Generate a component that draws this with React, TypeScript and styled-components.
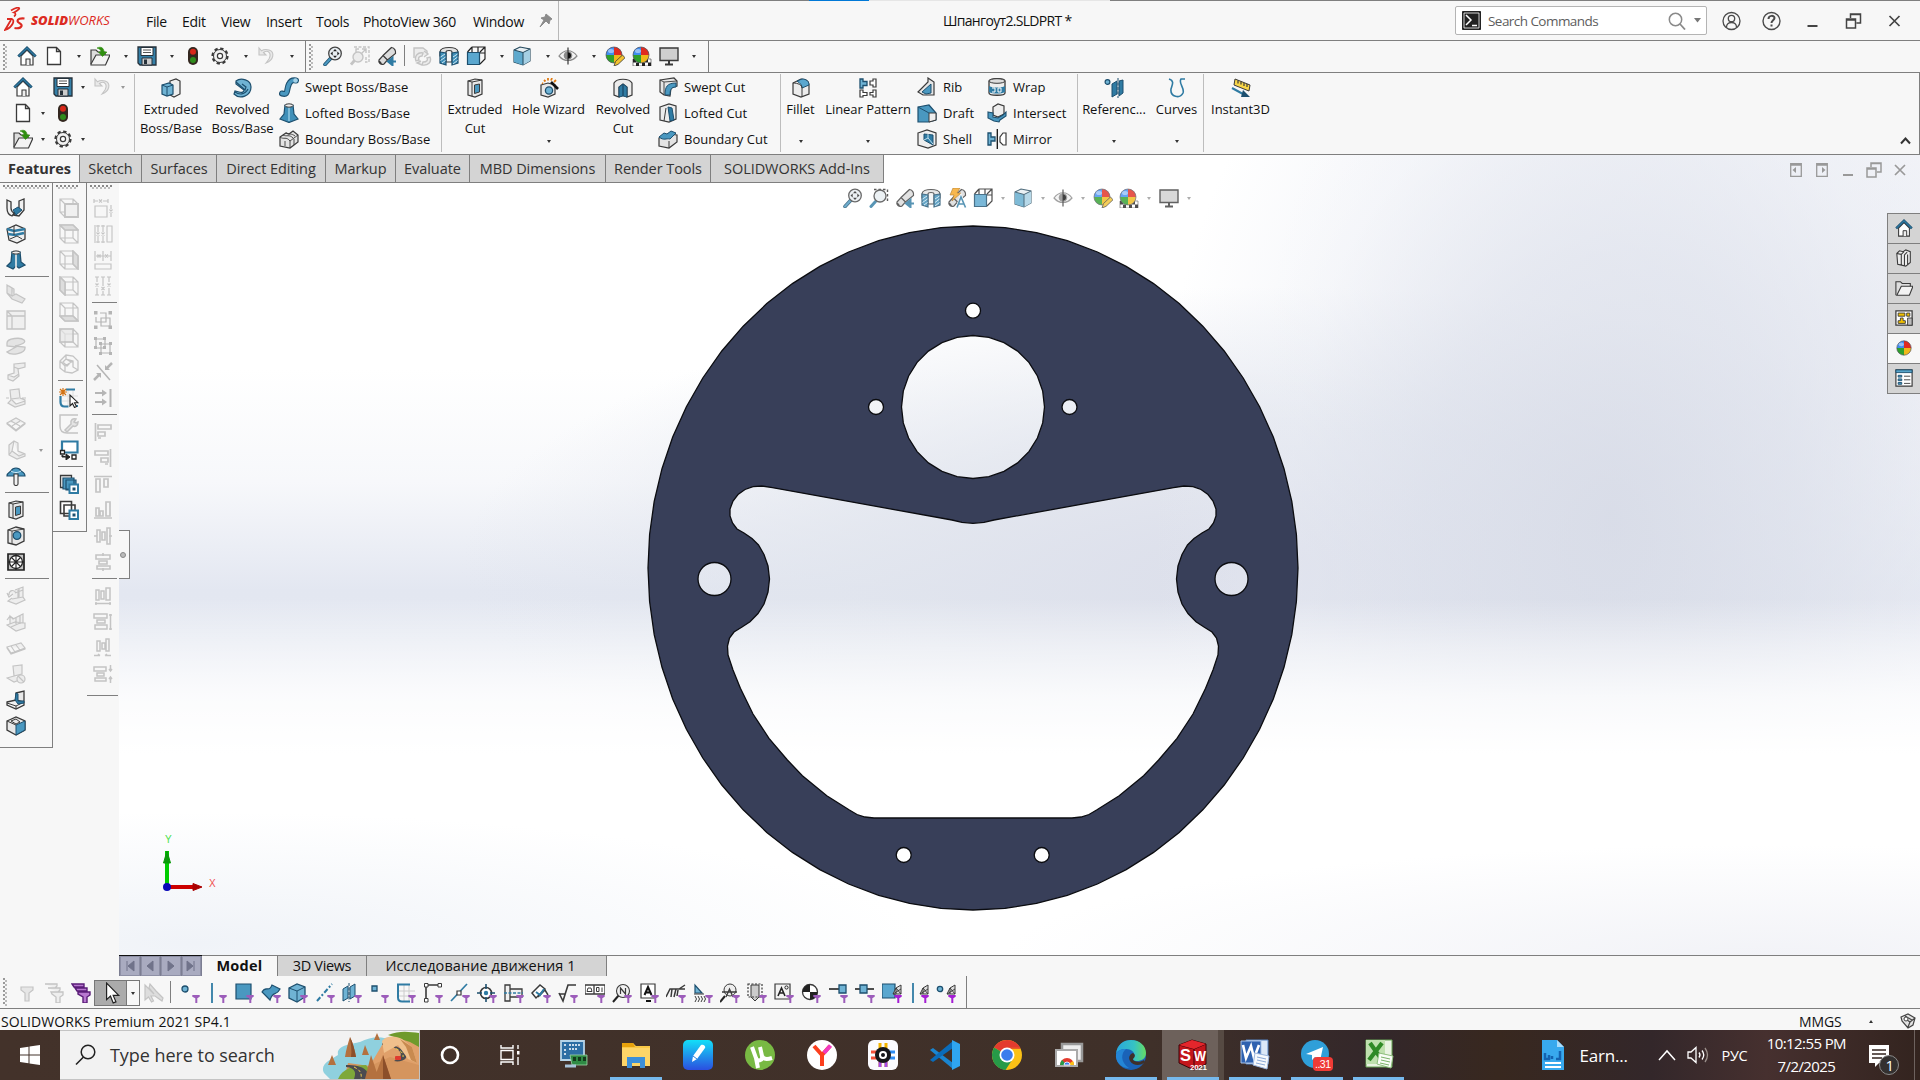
import React from 'react';
import styled, { createGlobalStyle } from 'styled-components';

const Global = createGlobalStyle`
  *{box-sizing:border-box}
  body{margin:0;background:#f7f7f7;overflow:hidden}
  svg{display:block;flex:none}
`;

const K = '#3a3a3a';
const B = '#2f7ba3';
const L = '#6fb3d4';
const D = '#1d4f6e';
const G = '#c4c4c4';
const P = '#9c5cba';
const M = '#b5b5b5';

/* ---------- glyphs, 20 x 20 ---------- */
const funnel = <path d="M12.3 12h7.4v1.8l-2.4 1.4V20h-2v-4.8l-3-1.4z" fill={P} />;
const funnelHot = <path d="M12.3 12h7.4v1.8l-2.4 1.4V20h-2v-4.8l-3-1.4z" fill="#a41ed4" />;
const mesh = <path d="M11 11l3-6 5-3v9zM14 5v6M11 11l8-5M14 5l5 6" fill="#ddd" stroke={K} strokeWidth="1" />;
const ball = (
  <g>
    <path d="M9 9V1a8 8 0 0 0-8 8z" fill="#3f8df0" /><path d="M9 9V1a8 8 0 0 1 8 8z" fill="#e02b20" />
    <path d="M9 9H1a8 8 0 0 0 8 8z" fill="#2fa02c" /><path d="M9 9h8a8 8 0 0 1-8 8z" fill="#f0b81a" />
    <circle cx="9" cy="9" r="8" fill="none" stroke="#4a4a55" strokeWidth=".7" /><ellipse cx="6" cy="5" rx="3" ry="2" fill="#fff" opacity=".45" />
  </g>
);
const pencil = <path d="M9 20l1.5-4.500 7-6.500 2.500 2.800-7 6.600z" fill="#f2c230" stroke={K} strokeWidth=".8" />;
const checks = <g><path d="M1 13h18v7H1z" fill="#fff" stroke={K} strokeWidth=".6" /><path d="M1 13h3v3.500H1zM7 13h3v3.500H7zM13 13h3v3.500h-3zM4 16.500h3V20H4zM10 16.500h3V20h-3zM16 16.500h3V20h-3z" fill="#222" /></g>;
const lens = (x: number, y: number, r: number, f = '#e8eef2') => <circle cx={x} cy={y} r={r} fill={f} stroke="#444" strokeWidth="1.300" />;
const wire = <path d="M1 1h13v13H1zM6 6h13v13H6zM1 1l5 5M14 1l5 5M1 14l5 5M14 14l5 5" fill="none" stroke={G} strokeWidth="1.200" />;
const flash = <path d="M6 0h7l-3 5h4L5 13l2-6H3z" fill="#f6a623" stroke="#9a5b00" strokeWidth=".6" />;
const scope = <path d="M2 14l4-4.500 4.500 4.500L7 18c-3 1.500-6-1.500-5-4zM6 9.500L14.500 1.500c3 .5 4.500 3 4 6L10.500 14zM1.500 15c1 0 3 2 3 3.500" fill="#dcdcdc" stroke={K} strokeWidth="1.200" />;

const glyphs: Record<string, React.ReactNode> = {
  home: <g><path d="M4 10v9h12v-9l-6-6z" fill="#fff" stroke={K} strokeWidth="1.200" /><path d="M9 19v-6h4v6" fill="#eee" stroke={K} strokeWidth="1.100" /><path d="M1.300 10.500L10 2l8.700 8.500" fill="none" stroke={D} strokeWidth="2.800" /><path d="M1.600 10.100L10 2l8.400 8.100" fill="none" stroke={B} strokeWidth="1.200" /></g>,
  doc: <path d="M3.500 1.500h9l4 4v13h-13zM12.500 1.500v4h4" fill="#fff" stroke={K} strokeWidth="1.300" />,
  open: <g><path d="M1 18V4h5l2 2h7v3" fill="#ddd" stroke={K} strokeWidth="1.200" /><path d="M1 18L6 9h14l-4.500 10H1z" fill="#f3f3f3" stroke={K} strokeWidth="1.200" /><path d="M7 2c4-2 7 0 7 4h3l-4.500 4.500L8.500 6H11c0-2-1-3-4-4z" fill="#2f8f0f" stroke="#2f8f0f" strokeWidth=".6" /></g>,
  folder: <g><path d="M1 18V3h5l2 2h9v4" fill="#ddd" stroke={K} strokeWidth="1.200" /><path d="M2 18L7 8h13l-4 10z" fill="#f3f3f3" stroke={K} strokeWidth="1.200" /></g>,
  save: <g><path d="M1 1h18v18H3l-2-2z" fill="#3580a8" stroke="#26313a" strokeWidth="1.300" /><path d="M4 1.500h12v8H4z" fill="#fff" stroke="#26313a" /><path d="M6 4h8M6 6.500h8" stroke="#555" /><path d="M5 12h10v7H5z" fill="#ccc" stroke="#26313a" /><path d="M7 13.500h3V18H7z" fill="#26313a" /></g>,
  traffic: <g><rect x="5" y="1" width="10" height="18" rx="5" fill="#33271f" /><circle cx="10" cy="5.800" r="3" fill="#d8281a" /><circle cx="10" cy="14" r="3" fill="#2f8c1c" /></g>,
  gear: <g><circle cx="10" cy="10" r="7.400" fill="#f2f2f2" stroke={K} strokeWidth="2.400" strokeDasharray="3.300 2.500" /><circle cx="10" cy="10" r="6.500" fill="#f2f2f2" stroke={K} strokeWidth="1" /><circle cx="10" cy="10" r="2.600" fill="#fff" stroke={K} strokeWidth="1.200" /></g>,
  undo: <path d="M2 2v7h7L6.500 6.500C11 3.500 15 7 12 13l-3 4c8-3 9-11 3-13C9 3 6.500 3.500 4.500 4.800z" fill="#e9e9e9" stroke={G} strokeWidth="1.100" />,
  zoomFit: <g><path d="M8 12l-6 6.500" stroke={D} strokeWidth="3.600" strokeLinecap="round" /><path d="M8 12l-6 6.500" stroke="#4a98c0" strokeWidth="2" strokeLinecap="round" />{lens(12, 7.5, 6.3)}<path d="M12 3l2 2.200h-4zM12 12l2-2.200h-4zM7.500 7.500l2.200-2v4zM16.500 7.500l-2.200-2v4z" fill="#222" /></g>,
  zoomOff: <g stroke={G} fill="none" strokeWidth="1.400"><path d="M4 1h15v15h-4" strokeDasharray="3 1.500" /><circle cx="8" cy="11" r="5" fill="#ececec" /><path d="M4.500 14.500L1 18.500" strokeWidth="2.800" /><path d="M11 8l5-5m-4 0h4v4M9 3H6v3M16 11v3" /></g>,
  prev: <g>{scope}<path d="M19 15.500h-6M15.500 11.800l-4.500 3.700 4.500 3.700z" fill={B} stroke={B} strokeWidth="2" /></g>,
  zoomArea: <g><path d="M5 1.500h13.500v13" fill="none" stroke="#333" strokeWidth="1.400" strokeDasharray="2.500 2" /><path d="M6.500 13.500L2 18.500" stroke={B} strokeWidth="3" strokeLinecap="round" />{lens(11, 8, 6)}</g>,
  rotOff: <g fill="#ececec" stroke={G} strokeWidth="1.400"><path d="M2 12V2h9l4 3v3" /><path d="M4 15c-2-5 2-9 7-8l-1 3c-3 0-4 2-3 4zM18 11c2 5-2 9-8 8l1-3c4 0 5-2 4-4zM12 5l4 3-4 3M9 15l-4 2 5 2" /></g>,
  section: <g><path d="M1 6c0-6 18-6 18 0v4H1z" fill="#e2e2e2" stroke={K} strokeWidth="1.200" /><path d="M7 6c0-2 6-2 6 0v10H7z" fill="#f5f5f5" stroke={K} strokeWidth="1.100" /><path d="M1 6l6 1v12l-6-2zM19 6l-6 1v12l6-2z" fill="#3f8fb8" stroke={D} strokeWidth="1.200" /><path d="M1.500 11L6 8M1.500 14.500L6.500 11M3 17l3.500-2.500M14 11l4.500-3M14 14.500l4.500-3.500M14 18l4.500-3.500" stroke="#cfe8f4" strokeWidth="1" /></g>,
  orient: <g><path d="M6 1h13v12l-5 5M6 1L1.500 6M19 1l-5 5M12 1v6M14 7h5M6 1v5" fill="none" stroke="#222" strokeWidth="1.200" /><path d="M1.500 6.500h12v12h-12z" fill="#5aa7cf" stroke={D} strokeWidth="1.200" /></g>,
  shaded: <g><path d="M2 4l6-3 10 2v12l-7 4-9-3z" fill="#e6eef2" stroke="#24485c" strokeWidth="1.100" /><path d="M2 4l9 2.500V19l-9-3z" fill="#5ea9cd" /><path d="M11 6.500L18 3v12l-7 4z" fill="#a5cfe3" /><path d="M2 4l9 2.500L18 3M11 6.500V19" fill="none" stroke="#24485c" /></g>,
  eye: <g><path d="M1 10c5-7 13-7 18 0-5 6-13 6-18 0z" fill="#f3f3f3" stroke="#8a8a8a" strokeWidth="1.200" /><circle cx="10" cy="9.500" r="4.300" fill="#8a8a8a" /><path d="M10 1.500v17" stroke="#333" strokeWidth="1.200" /><path d="M10 6.500a3 3 0 0 1 0 6z" fill="#111" /></g>,
  ballPencil: <g>{ball}{pencil}</g>,
  ballScene: <g>{checks}{ball}</g>,
  ball: <g transform="translate(1 1)">{ball}</g>,
  monitor: <g><path d="M1 2h18v12.500H1z" fill="#cfcfcf" stroke={K} strokeWidth="1.400" /><path d="M10 14.500v4M6 18.500h8" stroke={K} strokeWidth="2" /></g>,
  annot: <g>{scope}{flash}<path d="M10 19.500L14 9l4.500 10.500M11.500 16h5.500" fill="none" stroke="#fff" strokeWidth="3" /><path d="M10 19.500L14 9l4.500 10.500M11.500 16h5.500" fill="none" stroke={B} strokeWidth="1.600" /></g>,
  extrude: <g><path d="M9 3l6-2 4 2v13l-6 3-4-2z" fill="#eee" stroke={K} strokeWidth="1.200" /><path d="M1 7l7-2 4 2v9l-6 2-5-2z" fill={L} stroke={D} strokeWidth="1.200" /><path d="M1 7l5 2 6-2M6 9v9" fill="none" stroke={D} /></g>,
  revolve: <g><path d="M3 3c5-4 15-1 15 6 0 9-11 13-17 7l1-3 4 1c3 1 5 0 5-2L3 6z" fill={L} stroke={D} strokeWidth="1.200" /><path d="M3 4l9 8 1-3-4-3M2 14c4 3 10 3 13-3" fill="none" stroke={D} strokeWidth="1.200" /></g>,
  sweep: <g><path d="M3 16.500c7 2 4-4 7-9.500 2-4 4-4 7-3.500" fill="none" stroke={D} strokeWidth="6" strokeLinecap="round" /><path d="M3 16.500c7 2 4-4 7-9.500 2-4 4-4 7-3.500" fill="none" stroke="#4a98c0" strokeWidth="3.800" strokeLinecap="round" /><circle cx="16.500" cy="3.500" r="2.200" fill="#a5d2e8" /></g>,
  loft: <g><path d="M6 2h8l1 9 4 5-9 3.500L1 16l4-5z" fill="#3f8fb8" stroke={D} strokeWidth="1.200" /><path d="M10 4v14" stroke="#7dbbd8" strokeWidth="2" /><ellipse cx="10" cy="2.500" rx="4" ry="1.700" fill="#eee" stroke={K} /></g>,
  boundary: <g><path d="M1 8l6-4 3 1 4-3 5 4v7l-8 6-10-2z" fill="#e4e4e4" stroke={K} strokeWidth="1.200" /><path d="M1 8c4 3 6-1 10 4l8-6M11 12v7M4 6c4 2 6-1 10 3M7 4c4 2 5 0 9 3M6 12v5M15 10v6" fill="none" stroke={K} strokeWidth=".9" /></g>,
  cutExtrude: <g><path d="M3 3l7-2 7 1v14l-7 3-7-2z" fill="#e8e8e8" stroke={K} strokeWidth="1.200" /><path d="M3 3l4 1 10-2M7 4v14.500" fill="none" stroke={K} /><path d="M9.500 7l5-1v8l-5 1.500z" fill="#4a98c0" stroke={K} /></g>,
  hole: <g><path d="M2 7l7-2 7 2v9l-7 3-7-2z" fill="#e8e8e8" stroke={K} strokeWidth="1.200" /><circle cx="10" cy="12.500" r="3.600" fill={L} stroke={D} strokeWidth="1.300" /><path d="M12 4l7 7" stroke="#111" strokeWidth="2.600" /><path d="M5 2l1.500 1.500M9 0v2.500M13 0l-1 2.500M3 5l1 .5M17 2l-2 2" stroke="#e07b12" strokeWidth="1.800" /></g>,
  revCut: <g><path d="M1 5c3-5 15-5 18 0v12l-5 2V9l-4-3-4 3v10l-5-2z" fill="#ececec" stroke={K} strokeWidth="1.200" /><path d="M6 9l4-3v12l-4 1zM10 6l4 3v10l-4-1z" fill={B} stroke={D} /></g>,
  sweptCut: <g><path d="M2 3l14-2 3 3v5l-6 2-1 8-6-1-4-3z" fill="#e6e6e6" stroke={K} strokeWidth="1.200" /><path d="M7 18c0-8 2-12 11-12v4c-5 0-6 3-6 8z" fill="#4a98c0" stroke={D} /><path d="M2 3l4 2v13M6 5l13-1" fill="none" stroke={K} strokeWidth=".9" /></g>,
  loftCut: <g><path d="M2 4l9-3 7 2v13l-7 3-9-2z" fill="#ececec" stroke={K} strokeWidth="1.200" /><path d="M10 4l4 1 2 12-4 1z" fill={B} stroke={D} /><path d="M8 5L6 18" stroke={K} /></g>,
  boundCut: <g><path d="M1 9l9-4 9 1v7l-8 6-10-2z" fill="#e4e4e4" stroke={K} strokeWidth="1.200" /><path d="M1 8l5-4 3 1 4-3 5 2-6 6c-4-1-6 2-11-2z" fill="#4a98c0" stroke={D} /><path d="M11 12v7" stroke={K} /></g>,
  fillet: <g><path d="M2 5l8-4c5 0 8 2 8 6v9l-8 3-8-3z" fill="#ececec" stroke={K} strokeWidth="1.200" /><path d="M6 3l5-2c4 0 7 2 7 6l-7 3c0-3-2-5-5-7z" fill="#5aa7cf" stroke={D} /><path d="M11 10v9M2 5c5 0 9 2 9 5" fill="none" stroke={K} /></g>,
  pattern: <g><path d="M2 1h3v2.500h4v4H5V10H2z" fill={L} stroke={D} strokeWidth="1.300" /><path d="M12 3h3V1h3v8h-3V7h-3zM2 12h3v2.500h4v3H5V19H2zM12 14.500h3V12h3v7h-3v-2h-3z" fill="#fff" stroke={K} strokeWidth="1.200" /></g>,
  rib: <g><path d="M1 15L11 5V1l6 4v13H6z" fill="#e6e6e6" stroke={K} strokeWidth="1.200" /><path d="M5 15l9-8v9l-5 1z" fill="#4a98c0" stroke={D} /></g>,
  draft: <g><path d="M1 4l11-2 7 8v7l-7 2H1z" fill="#4a98c0" stroke={D} strokeWidth="1.200" /><path d="M12 10h7v7l-7 2z" fill="#eee" stroke={K} /><path d="M1 4l11 6" stroke={D} /></g>,
  shell: <g><path d="M1 4l9-3 9 3v12l-8 3-10-3z" fill="#eee" stroke={K} strokeWidth="1.200" /><path d="M7 5l9 1v10l-9-5z" fill={B} stroke={D} /><path d="M7 11l4-2V5M11 9l5 6" fill="none" stroke="#bfe0ef" /></g>,
  wrap: <g><path d="M2 4c0-3 16-3 16 0v12c0 3-16 3-16 0z" fill="#eee" stroke={K} strokeWidth="1.300" /><ellipse cx="10" cy="4" rx="8" ry="2.300" fill="#ddd" stroke={K} /><path d="M2 9c4 2 12 2 16 0v6c-4 2-12 2-16 0z" fill={B} /><path d="M5 11h3v4H5M11 11h3v4h-3z" fill="none" stroke="#fff" /></g>,
  intersect: <g><path d="M6 4l5-3 6 2v8l-6 3-5-2z" fill="#eee" stroke={K} strokeWidth="1.200" /><path d="M1 9l5 1v4l5 1 5-3 3-3v4l-6 4-1 2-5-1-6-3z" fill="#4a98c0" stroke={D} strokeWidth="1.100" /></g>,
  mirror: <g><path d="M1 4h3v4h4v4H4v4H1z" fill={L} stroke={D} strokeWidth="1.300" /><path d="M19 4v12h-3l-3-3V8l3-4z" fill="#fff" stroke={K} strokeWidth="1.200" /><path d="M10.300 0v20" stroke="#111" strokeWidth="1.300" /></g>,
  refgeom: <g><circle cx="3.500" cy="4" r="2.400" fill={L} stroke={D} strokeWidth="1.200" /><path d="M8 6l5-3v13l-5 3zM15 3l4-1v13l-4 3z" fill={B} stroke={D} /><path d="M14 0v20" stroke={D} strokeDasharray="3 1.500" /></g>,
  curves: <path d="M2 1c6 2 3 6 2 10-1 8 9 10 12 4 2-5-5-10-2-14h4" fill="none" stroke={B} strokeWidth="1.600" />,
  instant: <g><path d="M4 1l15 6-1 6L3 7z" fill="#f8d648" stroke={K} /><path d="M7 2.500v3M10 3.500v3M13 5v3M16 6v3" stroke={K} strokeWidth="1.200" /><path d="M1 10l11 6" stroke={B} strokeWidth="2" /><path d="M12 12l7 7h-9z" fill={D} /></g>,
  bendA: <g><path d="M1 2l4 2v6c0 2 1 4 3 5l-2 3c-3-1-5-4-5-8zM13 3l5-2v11l-5 6-6-1 6-5z" fill="#f0f0f0" stroke={K} strokeWidth="1.300" /><path d="M7 12l5-3 4 3-6 5z" fill={B} stroke={D} /></g>,
  bendB: <g><path d="M1 5l9-4 9 4v10l-8 4-8-3z" fill="#f0f0f0" stroke={K} strokeWidth="1.300" /><path d="M1 5l7 2 11-2M2 10l7 1 9-2" fill="none" stroke={B} strokeWidth="2.400" /><path d="M8 2v9M4 15l7-3 5 3" fill="none" stroke={K} /></g>,
  bendC: <g><path d="M6 2h8l1 10 4 3-6 3-3-2-3 3-6-3 4-4z" fill="#2f7ba3" stroke={D} strokeWidth="1.300" /><path d="M10 4v14" stroke="#eee" strokeWidth="1.600" /><ellipse cx="10" cy="2.500" rx="4" ry="1.600" fill="#eee" stroke={K} /></g>,
  g1: <path d="M1 1l5 3v8l-5-3zM6 12l4-2 9 5-3 4-10-4-5-6M3 2l5 3v6" fill="#e4e4e4" stroke={G} strokeWidth="1.200" />,
  g2: <path d="M1 1h18v18H1zM1 6h18M6 6v13M1 1l5 5" fill="#efefef" stroke={G} strokeWidth="1.300" />,
  g3: <path d="M1 7c0-5 14-6 17-3 2 2 0 4-9 6l10 1c1 7-14 9-18 5l9-5-9-1z" fill="#e4e4e4" stroke={G} strokeWidth="1.300" />,
  g4: <path d="M8 2l11-1v4l-7 2 1 7-6 5-5-2 0-4 6-2zM8 5l5 2M2 13l6 2 5-3" fill="#ececec" stroke={G} strokeWidth="1.200" />,
  g5: <path d="M4 2l9-1 1 9 5 2v4l-10 3-7-4 3-3zM5 11l8-1M6 12l4 4 9-3M0 10h3M16 10h4" fill="#ececec" stroke={G} strokeWidth="1.200" />,
  g6: <path d="M1 9l9-5 9 5-9 7zM5 7l9 5M14 7l-8 5M1 9v1l9 7 9-7V9" fill="#efefef" stroke={G} strokeWidth="1.100" />,
  g7: <path d="M3 5l5-4 4 2v8l7 3v2l-8 3-8-4zM8 1l-2 10 7 5M6 11l-3 4M13 16l5-2" fill="#ececec" stroke={G} strokeWidth="1.200" />,
  umbrella: <g><path d="M1 10c0-3 3-4 4-5 2-4 8-4 10 0 2 1 4 2 4 5H1z" fill="#4a98c0" stroke={D} strokeWidth="1.200" /><path d="M5 5c3 2 7 2 10 0" fill="none" stroke="#d5edf8" /><path d="M8 8h4v10c0 2-4 2-4 0z" fill="#f3f3f3" stroke={K} strokeWidth="1.100" /></g>,
  holeSq: <g><path d="M2 4l8-3 8 2v12l-8 4-8-2z" fill="#e8e8e8" stroke={K} strokeWidth="1.300" /><circle cx="11" cy="9.500" r="3.800" fill="#4a98c0" stroke={D} strokeWidth="1.300" /><path d="M2 4l4 1 12-2M6 5v13" fill="none" stroke={K} strokeWidth=".9" /></g>,
  vent: <g><path d="M2 2h16v16H2z" fill="#c4c4c4" stroke="#222" strokeWidth="1.700" /><circle cx="10" cy="10" r="6.500" fill="#fff" stroke="#222" strokeWidth="1.300" /><path d="M10 2v16M2 10h16M5.500 5.500l9 9M14.500 5.500l-9 9" stroke="#222" strokeWidth="1.100" /></g>,
  g8: <path d="M9 4l8-3v10l2 3-9 4-8-3 4-3M3 9c0-5 5-6 7-2M1 7l2 4 4-3M12 4v8M6 13l11-2M13 2v9M9 7l8-3" fill="#eee" stroke={G} strokeWidth="1.200" />,
  g9: <path d="M1 13l8-3 10 1v5l-9 3zM4 12V4l3 3 10-5v9M10 6v6M14 4v8M1 8l3-4 4 3M5 15l9-4" fill="#eee" stroke={G} strokeWidth="1.200" />,
  g10: <path d="M1 9l14-4 4 5-14 5zM5 8l4 6M10 7l4 5M1 9v1l4 6 14-5v-1" fill="#efefef" stroke={G} strokeWidth="1.100" />,
  g11: <g stroke={G} fill="#ececec" strokeWidth="1.200"><path d="M7 2l9-1v9l-8 2zM8 12l-7 2 7 4 8-3" /><circle cx="15" cy="15" r="4" /><path d="M12 12l6 6" /></g>,
  fold: <g><path d="M10 3l8-2v10l-8 3z" fill="#e8e8e8" stroke={K} strokeWidth="1.300" /><path d="M1 12l9-2 8 2v3l-8 4-9-4z" fill="#f2f2f2" stroke={K} strokeWidth="1.300" /><path d="M1 13l9 3 8-4M10 16v3" fill="none" stroke={K} /><path d="M9 10l1-7 2 1v7l6 0v2l-6 1z" fill={B} stroke={D} /></g>,
  box3: <g><path d="M1 5l9-4 9 4v9l-9 5-9-5z" fill="#e8e8e8" stroke={K} strokeWidth="1.300" /><path d="M10 9l9-4v9l-9 5z" fill="#4a98c0" stroke={D} /><path d="M1 5l9 4M5 5l5-2 4 3-4 2z" fill="none" stroke={K} /></g>,
  w1: <g>{wire}<path d="M6 6h13v13H6z" fill="#f0f0f0" stroke={G} strokeWidth="1.800" /></g>,
  w2: <g>{wire}<path d="M1 1h13l5 5H6z" fill="#ddd" stroke={G} strokeWidth="1.600" /></g>,
  w3: <g>{wire}<path d="M14 1l5 5v13l-5-5z" fill="#ddd" stroke={G} strokeWidth="1.600" /></g>,
  w4: <g>{wire}<path d="M1 1l5 5v13l-5-5z" fill="#ddd" stroke={G} strokeWidth="1.600" /></g>,
  w5: <g>{wire}<path d="M1 14h13l5 5H6z" fill="#ddd" stroke={G} strokeWidth="1.600" /></g>,
  w6: <g>{wire}<path d="M1 1h13v13H1z" fill="#e6e6e6" opacity=".7" stroke={G} strokeWidth="1.800" /></g>,
  w7: <path d="M1 7l6-6 7 1 5 5v9l-6 3-7-1-5-4zM1 7l5 5 8-5M6 12v6M7 1v4l7 2v6l5 3M7 5L4 8l4 4 4-4z" fill="none" stroke={G} strokeWidth="1.300" />,
  sketch: <g><path d="M9 2v16M14 2v16M3 8h16M3 13h16" stroke="#ddd" /><path d="M7 1.500h9M1.500 8v6c0 3 1 4.500 4 4.500h4M16 18h3" fill="none" stroke={B} strokeWidth="2.200" /><path d="M4 0v8M0 4h8M1 1l6 6M7 1L1 7" stroke="#d27416" strokeWidth="1.200" /><path d="M11 7v11l2.500-2.500 2 4 2-1-2-3.800H19z" fill="#fff" stroke="#222" strokeWidth="1.100" /></g>,
  wrench: <g fill="none" stroke={G} strokeWidth="1.500"><path d="M1 12V1h18M1 12c0 5 2 7 7 7h11" /><path d="M6 16l6-6c-1-4 2-6 5-5l-2 3 2 1 2-1c0 4-3 5-5 4l-6 6z" fill="#e4e4e4" /></g>,
  screen: <g><path d="M3 1.500h15.500v11H3z" fill="#fff" stroke={B} strokeWidth="2.200" /><path d="M1.500 10.500h4v3.500h-4zM13 15h4v4h-4z" fill="#fff" stroke="#222" strokeWidth="1.300" /><path d="M3 15v2h5M7 14l4 3-4 3z" fill="#222" stroke="#222" /></g>,
  stackA: <g><path d="M1.500 1.500h11v12h-11z" fill="#ececec" stroke={K} strokeWidth="1.300" /><path d="M4 4h11v11H4zM7 6h10v10H7z" fill="#4a98c0" stroke={D} strokeWidth="1.200" /><path d="M10.500 10.500h8.500v8.500h-8.500z" fill="#fff" stroke={B} strokeWidth="2" /><path d="M13.500 13.500h3v3h-3z" fill={D} /></g>,
  stackB: <g><path d="M1.500 1.500h11v12h-11zM5 5h11v11H5z" fill="#fff" stroke={K} strokeWidth="1.600" /><path d="M10.500 10.500h8.500v8.500h-8.500z" fill="#fff" stroke={B} strokeWidth="2" /><path d="M13.500 13.500h3v3h-3z" fill={D} /></g>,
  d1: <path d="M2 8h12v11H2zM1 3h4M10 3h5M6 1.500l3 3M9 1.500l-3 3M1 1v4M15 1v4M18 7v4M18 15v4M16.500 11.500l3 3M19.500 11.500l-3 3" fill="none" stroke={G} strokeWidth="1.200" />,
  d2: <path d="M2 1v18M14 2h5v16h-5zM5 1v7M5 12v7M10 1v7M10 12v7M3.500 8.500l3 3M6.500 8.500l-3 3M8.500 8.500l3 3M11.500 8.500l-3 3M3 2h4M3 18h4M8 2h4M8 18h4" fill="none" stroke={G} strokeWidth="1.100" />,
  d3: <path d="M2 1v10M10 1v10M18 1v10M3 6h2M7 6h5M15 6h3M4.500 4.500l3 3M7.500 4.500l-3 3M12 4.500l3 3M15 4.500l-3 3M2 14h16v5H2z" fill="none" stroke={G} strokeWidth="1.200" />,
  d4: <path d="M4 1v5M4 12v7M10 1v9M10 15v4M16 1v5M16 12v7M2 1h4M8 1h4M14 1h4M2 19h4M8 19h4M14 19h4M2.500 7.500l3 3M5.500 7.500l-3 3M8.500 11l3 3M11.500 11l-3 3M14.500 7.500l3 3M17.500 7.500l-3 3" fill="none" stroke={G} strokeWidth="1.200" />,
  d5: <g fill="none" stroke={M} strokeWidth="1.200"><path d="M7 3h6v9H3V7M8 8h9v8H8z" /><path d="M1 1h3.500v3.500H1zM15.500 1H19v3.500h-3.500zM1 15.500h3.500V19H1zM15.500 15.500H19V19h-3.500z" fill={M} stroke="none" /></g>,
  d6: <g fill="none" stroke={M} strokeWidth="1.200"><path d="M3 3h9v9H3zM8 8h9v9H8z" /><path d="M1 1h3v3H1zM10 1h3v3h-3zM1 10h3v3H1zM10 10h3v3h-3zM6 6h3v3H6zM16 6h3v3h-3zM6 16h3v3H6zM16 16h3v3h-3z" fill={M} stroke="none" /></g>,
  d7: <g fill="none" stroke={M} strokeWidth="1.500"><path d="M4 3l13 15" /><path d="M1 18l5-5M19 1l-5 5" strokeWidth="2.500" /><path d="M3 11h5v5zM17 8h-5V3z" fill={M} stroke="none" /></g>,
  d8: <g fill="none" stroke={M} strokeWidth="2"><path d="M2 5h9M2 14h9M17.500 1v18" /><path d="M9 1.500l5 3.500-5 3.500zM9 10.500l5 3.500-5 3.500z" fill={M} stroke="none" /></g>,
  a1: <path d="M2.500 1v18M5 3h13v4H5zM5 10h7v4H5zM5 16h3" fill="none" stroke={G} strokeWidth="1.700" />,
  a2: <path d="M17.500 1v18M2 3h13v4H2zM8 10h7v4H8zM12 16h3" fill="none" stroke={G} strokeWidth="1.700" />,
  a3: <path d="M1 2.500h18M3 5h4v13H3zM11 5h4v8h-4z" fill="none" stroke={G} strokeWidth="1.700" />,
  a4: <path d="M1 18h18M3 8h3v8H3zM7 11h3v5H7zM13 2h4v14h-4z" fill="none" stroke={G} strokeWidth="1.700" />,
  a5: <path d="M1 10h3M16 10h3M4 4h3v12H4zM9 6h3v8H9zM14 2h3v16h-3z" fill="none" stroke={G} strokeWidth="1.600" />,
  a6: <path d="M10 1v3M10 16v3M3 3h14v4H3zM6 9h8v3H6zM4 14h13v3H4z" fill="none" stroke={G} strokeWidth="1.600" />,
  b1: <path d="M3 4h3v10H3zM8 5h3v8H8zM13 2h4v12h-4zM2 17.500h16M3 16v3M17 16v3" fill="none" stroke={G} strokeWidth="1.500" />,
  b2: <path d="M1 2h13v4H1zM4 8h8v3H4zM2 13h12v4H2zM17.500 2v16M16 3h3M16 17h3" fill="none" stroke={G} strokeWidth="1.500" />,
  b3: <path d="M4 3h3v10H4zM9 5h3v6H9zM13 1h3v12h-3zM1 17.500h6M12 17.500h6M5 16l2 1.500M14 16l-2 1.500" fill="none" stroke={G} strokeWidth="1.500" />,
  b4: <path d="M1 3h12v4H1zM4 9h7v3H4zM2 14h11v3H2zM17.500 1v6M17.500 13v6M16 5l1.500 2L19 5M16 15l1.500-2 1.500 2" fill="none" stroke={G} strokeWidth="1.500" />,
  fOff: <path d="M4 4h12v3l-4 3v8H8v-8L4 7z" fill="#e6e6e6" stroke={G} strokeWidth="1.200" />,
  fOff2: <path d="M1 1h12v2l-2 2M4 5h12v2l-2 2M7 9h12v3l-3 2v6h-4v-6l-4-3z" fill="#eee" stroke={G} strokeWidth="1.300" />,
  fOn: <path d="M1 1h12v3H3zM4 5h12v3H6zM7 9h12v3l-3 2v6h-4v-6l-5-3z" fill="#b878d0" stroke="#5a1d78" strokeWidth="1.400" />,
  cursor: <path d="M6 1v15l3.500-3.300L12 19l2.500-1-2.500-5.800h5z" fill="#fff" stroke="#222" strokeWidth="1.100" />,
  cursOff: <path d="M1 2v15l3.500-3 3 5 2-1-2.500-5h4l7 5 1-3-7-7-6-7-1 4 5 6z" fill="#ddd" stroke={G} strokeWidth="1.200" />,
  s1: <g><circle cx="5" cy="6" r="3" fill={L} stroke={D} strokeWidth="1.300" />{funnel}</g>,
  s2: <g><path d="M5 0v20" stroke={B} strokeWidth="1.800" />{funnel}</g>,
  s3: <g><path d="M2 1h15v15H2z" fill="#4a98c0" stroke={D} strokeWidth="1.200" />{funnel}</g>,
  s4: <g><path d="M1 9c4-7 7 1 10-7l8 4c-4 8-7 1-10 11z" fill="#4a98c0" stroke={D} strokeWidth="1.200" />{funnel}</g>,
  s5: <g><path d="M1 5l8-4 8 3v10l-8 5-8-4z" fill="#6fb3d4" stroke={D} strokeWidth="1.300" /><path d="M1 5l8 3 8-4M9 8v10" fill="none" stroke={D} />{funnel}</g>,
  s6: <g><path d="M2 18L17 1" stroke={B} strokeWidth="2" strokeDasharray="5 2 2 2" />{funnel}</g>,
  s7: <g><path d="M1 6l5-3v12l-5 3zM8 4l5-3v12l-5 3z" fill={L} stroke={D} /><path d="M7 0v19" stroke={D} strokeDasharray="3 1.500" />{funnel}</g>,
  s8: <g><path d="M3 3h5v5H3z" fill={L} stroke={D} strokeWidth="1.300" />{funnel}</g>,
  s9: <g><path d="M8 2v16M13 2v16M3 8h16M3 13h16" stroke="#ccc" /><path d="M14 1.500H2v13c0 3 1 4 4 4h8" fill="none" stroke={B} strokeWidth="2" />{funnel}</g>,
  s10: <g><path d="M3 17V2h14" fill="none" stroke={K} strokeWidth="1.600" /><path d="M1.500 .5h3.500v3.500H1.500zM15 .5h3.500v3.500H15zM1.500 15.500h3.500V19H1.500z" fill="#fff" stroke={K} />{funnel}</g>,
  s11: <g><path d="M1 18L17 1" stroke={B} strokeWidth="1.700" /><path d="M7 8h4v4H7z" fill="#fff" stroke={K} strokeWidth="1.200" />{funnel}</g>,
  s12: <g><circle cx="9" cy="10" r="5.500" fill="#fff" stroke={K} strokeWidth="1.600" /><path d="M9 1v5M9 14v5M0 10h5M13 10h5" stroke={D} strokeWidth="1.600" /><circle cx="9" cy="10" r="2.200" fill={B} />{funnel}</g>,
  s13: <g><path d="M1 2h5v16H1zM6 6h12v8H6z" fill="#f0f0f0" stroke={K} strokeWidth="1.300" /><path d="M0 10h19" stroke={B} strokeWidth="1.400" strokeDasharray="3 1.500" />{funnel}</g>,
  s14: <g><path d="M1 10l8-8 5 4-9 9zM7 14l7-7 3 5" fill="#fff" stroke={K} strokeWidth="1.500" /><path d="M5 9l4 3 4-6" fill="none" stroke={B} strokeWidth="2" />{funnel}</g>,
  s15: <g><path d="M1 10l4 8 5-16h8M2 11h5" fill="none" stroke={K} strokeWidth="1.600" />{funnel}</g>,
  s16: <g><path d="M0 2h20v9H0zM9 2v9" fill="#fff" stroke={K} strokeWidth="1.300" /><path d="M2 8.500h5l-1-3.500H3zM11.500 4.500h2.500v4h-2.500zM17 4.500v4.500" fill="none" stroke={K} />{funnel}</g>,
  s17: <g><path d="M7 12l-6 7" stroke="#222" strokeWidth="2" /><circle cx="11" cy="8" r="6.500" fill="#f0f0f0" stroke={K} strokeWidth="1.100" /><path d="M8.500 11V5l5 6V5" fill="none" stroke={K} strokeWidth="1.200" />{funnel}</g>,
  s18: <g><path d="M2 1h14v14H2z" fill="#fff" stroke={K} strokeWidth="1.200" /><path d="M5.500 12L9 4l3.500 8M6.500 9.500h5M7 18h5" fill="none" stroke="#111" strokeWidth="2" />{funnel}</g>,
  s19: <g><path d="M0 14L4 6h9M6 6l-1 8M10 6l-2 8M13 6l6-4M12 7l-1 6M13 6h6" fill="none" stroke={K} strokeWidth="1.500" />{funnel}</g>,
  s20: <g><path d="M2 2v8h7z" fill={L} stroke={D} strokeWidth="1.200" /><path d="M1 11h10M2 13q3 3 0 6M5 13q3 3 0 6M8 13q3 3 0 6M11 13q3 3 0 6" fill="none" stroke={K} />{funnel}</g>,
  s21: <g><path d="M5 13l-5 6" stroke="#222" strokeWidth="2" /><circle cx="10" cy="7" r="6" fill="#eee" stroke={K} /><path d="M2 9h15M6 14l3.500-8 3.500 8" fill="none" stroke={K} strokeWidth="1.300" />{funnel}</g>,
  s22: <g><path d="M4 2h8v12l-4 4-4-4z" fill="#ccc" stroke={K} /><path d="M1 1h14v13H1z" fill="none" stroke={K} strokeWidth="1.200" strokeDasharray="2 1.500" />{funnel}</g>,
  s23: <g><path d="M1 1h15v15H1z" fill="#f3f3f3" stroke={K} strokeWidth="1.200" /><path d="M4 13L7.500 5l3.500 8M5 10h5" fill="none" stroke="#222" strokeWidth="1.600" /><circle cx="12.500" cy="4.500" r="1.600" fill="none" stroke="#222" />{funnel}</g>,
  s24: <g><circle cx="9" cy="9" r="7.500" fill="#fff" stroke={K} strokeWidth="1.300" /><path d="M9 9V1.500A7.500 7.500 0 0 0 1.500 9zM9 9v7.500A7.500 7.500 0 0 0 16.500 9z" fill="#222" />{funnel}</g>,
  s25: <g><path d="M1 6h10" stroke="#222" strokeWidth="1.600" /><path d="M11 2h7v8h-7z" fill={L} stroke={D} strokeWidth="1.300" />{funnel}</g>,
  s26: <g><path d="M0 6h19" stroke="#222" strokeWidth="1.600" /><path d="M5 2h7v8H5z" fill={L} stroke={D} strokeWidth="1.300" />{funnel}</g>,
  s27: <g><path d="M0 1h13v14H0z" fill="#5aa7cf" stroke={D} strokeWidth="1.200" />{mesh}{funnelHot}</g>,
  s28: <g><path d="M4 0v20" stroke={B} strokeWidth="1.800" />{mesh}{funnelHot}</g>,
  s29: <g><circle cx="4" cy="6" r="2.700" fill={L} stroke={D} strokeWidth="1.300" />{mesh}{funnelHot}</g>,
  books: <path d="M2 5l3-3 4 1 3-2 5 2v12l-5 4-9-2zM2 5l5 1M7 6v12M7 6l3-3M10.500 6.500V18M10.500 6.500l3-3M14 6v12" fill="#ececec" stroke={K} strokeWidth="1.200" />,
  blocks: <g><path d="M1 2h18v16H1z" fill="#fff" stroke={K} strokeWidth="1.400" /><path d="M3.500 4.500H11v3.500H3.500zM13 4.500h3.500V8H13zM6 10h3v3h2.500v3h-8v-3H6z" fill="#f2c100" stroke={K} /><path d="M14 10h5v8h-5z" fill="#bbb" stroke={K} /></g>,
  list: <g><path d="M1 1h18v18H1z" fill="#fff" stroke={K} strokeWidth="1.300" /><path d="M1 1h18v3H1z" fill="#57a4c9" stroke={D} /><path d="M3.500 7h4v2h-4zM3.500 11h4v2h-4zM3.500 15h4v2h-4z" fill="#4a98c0" stroke={D} /><path d="M10 8h7M10 12h7M10 16h7" stroke={K} /></g>,
};

const Glyph = ({ n, s = 20 }: { n: string; s?: number }) => (
  <svg width={s} height={s} viewBox="0 0 20 20">{glyphs[n]}</svg>
);

/* ---------- shell ---------- */
const Screen = styled.div`
  width:1920px;height:1080px;display:flex;flex-direction:column;overflow:hidden;background:#f7f7f7;color:#111;
  font-family:"Open Sans","Noto Sans",sans-serif;font-size:13px;white-space:nowrap;
`;
const TitleBar = styled.header`
  height:41px;display:flex;align-items:center;border-top:1px solid #7f7f7f;border-bottom:1px solid #7f7f7f;position:relative;
`;
const TopLight = styled.div`position:absolute;left:809px;top:-1px;width:301px;height:1px;background:linear-gradient(90deg,#0078d7 60px,#e6e6e6 60px);`;
const Brand = styled.div`
  display:flex;align-items:center;width:146px;height:40px;padding:0 0 3px 4px;color:#dc2a22;
  font-size:13px;font-style:italic;gap:4px;
  span{letter-spacing:0;padding-top:2px}
  b{font-weight:800}
`;
const Menus = styled.nav`display:flex;align-items:center;height:100%;padding-top:2px;width:413px;border-right:1px solid #b8b8b8;font-size:14px;`;
const MenuItem = styled.span<{ $w: number }>`width:${p => p.$w}px;letter-spacing:-.32px;`;
const DocTitle = styled.div`width:896px;padding:0 0 0 384px;font-size:14px;letter-spacing:-.68px;`;
const Search = styled.div`
  width:252px;height:29px;background:#fff;border:1px solid #b4b4b4;border-radius:2px;display:flex;align-items:center;
  padding-left:6px;color:#5d5d5d;font-size:13.5px;
  span{margin-left:7px;flex:1;letter-spacing:-.55px}
`;
const WinButtons = styled.div<{ $pad: number; $cell: number }>`
  display:flex;align-items:center;padding-left:${p => p.$pad}px;
  > svg{width:${p => p.$cell}px}
`;

/* ---------- toolbars ---------- */
const QuickBar = styled.div`height:32px;display:flex;align-items:stretch;border-bottom:1px solid #7f7f7f;`;
const Cell = styled.span<{ $w?: number; $push?: number }>`
  width:${p => p.$w ?? 27}px;display:flex;align-items:center;justify-content:center;flex:none;padding:0 0 var(--drop,0px) ${p => p.$push ?? 0}px;
`;
const Rule = styled.i<{ $m?: string; $c?: string }>`width:1px;background:${p => p.$c ?? '#7f7f7f'};margin:${p => p.$m ?? '0'};flex:none;`;
const Grip = styled.i<{ $m?: string }>`
  width:4px;margin:${p => p.$m ?? '3px 0'};flex:none;
  background:radial-gradient(circle at 1px 1px,#999 .9px,transparent 1.1px) 0 0/4px 4px,radial-gradient(circle at 3px 3px,#bbb .8px,transparent 1px) 0 0/4px 4px;
`;
const HGrip = styled.i<{ $w: number }>`
  width:${p => p.$w}px;height:4px;margin:2px 0 6px -3px;flex:none;
  background:radial-gradient(circle at 1px 1px,#888 .9px,transparent 1.1px) 0 0/4px 4px,radial-gradient(circle at 3px 3px,#bbb .8px,transparent 1px) 0 0/4px 4px;
`;
const Tri = styled.i<{ $dim?: boolean }>`
  width:0;height:0;border:2.5px solid transparent;border-top:3.5px solid ${p => (p.$dim ? '#999' : '#333')};border-bottom:0;flex:none;
`;

/* '>' is a drop arrow, '|' a divider */
const Tools = ({ items, cell = 27, arrow = 19.5, push = 5, dim }: { items: string[]; cell?: number; arrow?: number; push?: number; dim?: boolean }) => (
  <>
    {items.map((it, i) =>
      it === '>' ? <Cell key={i} $w={arrow} $push={push}><Tri $dim={dim} /></Cell>
        : it === '|' ? <Rule key={i} $m="4px 4px 5px 3px" />
          : <Cell key={i} $w={cell}><Glyph n={it} /></Cell>,
    )}
  </>
);
const QuickTools = styled.div`display:flex;padding-bottom:1px;`;

const Ribbon = styled.div`height:82px;display:flex;border-bottom:1px solid #7f7f7f;position:relative;border-right:1px solid #7f7f7f;`;
const Starter = styled.div`
  width:134px;padding:1px 0 0 9px;display:grid;grid-template-columns:27px 13px 27px 13px 27px 13px;grid-auto-rows:26px;align-items:center;justify-items:center;
`;
const Big = styled.div<{ $w: number }>`
  width:${p => p.$w}px;padding:5px 0 11px;display:flex;flex-direction:column;align-items:center;text-align:center;line-height:19px;letter-spacing:-.03px;
  > svg{margin-bottom:2px}
  ${Tri}{margin-top:auto}
`;
const Stack = styled.div<{ $w: number }>`width:${p => p.$w}px;padding:1px 0 0 1px;display:flex;flex-direction:column;`;
const Small = styled.div`height:26px;display:flex;align-items:center;gap:6px;letter-spacing:.02px;`;
const Collapse = styled.div`margin-left:auto;align-self:flex-end;padding:0 8px 9px 0;`;

const BigBtn = ({ w, icon, lines, arrow }: { w: number; icon: string; lines: string[]; arrow?: boolean }) => (
  <Big $w={w}><Glyph n={icon} />{lines.map(l => <span key={l}>{l}</span>)}{arrow && <Tri />}</Big>
);
const SmallStack = ({ w, rows }: { w: number; rows: [string, string][] }) => (
  <Stack $w={w}>{rows.map(([g, t]) => <Small key={t}><Glyph n={g} />{t}</Small>)}</Stack>
);

/* ---------- work area ---------- */
const Work = styled.main`
  height:821px;display:flex;flex-direction:column;
  background:
    radial-gradient(ellipse 38% 16% at 10% 96%,rgba(236,240,246,.8),rgba(255,255,255,0)),
    radial-gradient(ellipse 40% 14% at 92% 98%,rgba(240,241,246,.9),rgba(255,255,255,0)),
    linear-gradient(180deg,rgba(255,255,255,0) 54%,rgba(255,255,255,.45) 60%,rgba(255,255,255,.8) 66%,#fff 73%),
    radial-gradient(ellipse 24% 80% at 84% 44%,rgba(214,218,230,.8) 0%,rgba(220,224,235,.65) 40%,rgba(232,235,243,.4) 70%,rgba(255,255,255,0) 100%),
    radial-gradient(ellipse 32% 70% at 98% 25%,rgba(228,231,240,.7),rgba(255,255,255,0)),
    radial-gradient(ellipse 42% 34% at 66% 50%,rgba(219,222,234,.95) 0%,rgba(224,228,237,.75) 50%,rgba(255,255,255,0) 100%),
    linear-gradient(180deg,rgba(255,255,255,0) 26%,rgba(240,242,247,.55) 40%,#e3e7f1 53%,#e4e8f1 60%,#f0f1f6 70%),#fff;
`;
const TabRow = styled.div`height:28px;display:flex;flex:none;`;
const Tab = styled.div<{ $w: number; $on?: boolean }>`
  width:${p => p.$w}px;height:28px;display:flex;align-items:center;justify-content:center;font-size:14.5px;letter-spacing:-.06px;
  background:${p => (p.$on ? '#f7f7f7' : '#d4d4d4')};font-weight:${p => (p.$on ? 700 : 400)};color:#333;
  border-right:1px solid #7f7f7f;border-bottom:1px solid #7f7f7f;
`;
const DocButtons = styled.div`margin-left:auto;display:flex;align-items:center;padding:2px 7px 0 0;> svg{width:26px}`;
const Body = styled.div`flex:1;display:flex;min-height:0;`;
const Dock = styled.aside`width:119px;background:#f7f7f7;display:flex;align-items:flex-start;flex:none;`;
const DockCol = styled.div<{ $w: number; $h: number; $pad: number; $right?: boolean }>`
  width:${p => p.$w}px;height:${p => p.$h}px;border-bottom:1px solid #7f7f7f;${p => p.$right ? 'border-right:1px solid #7f7f7f;' : ''}
  display:flex;flex-direction:column;padding-left:${p => p.$pad}px;
`;
const DockIcon = styled.div`height:26px;display:flex;align-items:center;${Tri}{margin-left:13px}`;
const DockRule = styled.i<{ $w: number }>`height:1px;width:${p => p.$w}px;margin:3px 0 4px -1px;background:#7f7f7f;flex:none;`;
const Right = styled.section`flex:1;display:flex;flex-direction:column;min-width:0;`;
const Canvas = styled.div`flex:1;position:relative;display:flex;justify-content:space-between;align-items:flex-start;`;
const Scene = styled.svg`position:absolute;left:0;top:0;`;
const Splitter = styled.div`
  width:11px;height:49px;margin-top:347px;background:#f7f7f7;border:1px solid #7f7f7f;border-left:0;display:flex;align-items:center;padding-left:1px;
  i{width:6px;height:6px;border-radius:3px;background:#bbb;border:1px solid #888}
`;
const Hud = styled.div`position:absolute;left:721px;top:2px;height:26px;display:flex;opacity:.8;`;
const TaskPane = styled.div`width:33px;margin-top:30px;position:relative;border:1px solid #7f7f7f;border-right:0;`;
const Pane = styled.div<{ $on?: boolean }>`
  height:30px;display:flex;align-items:center;justify-content:center;padding-bottom:2px;background:${p => (p.$on ? '#f7f7f7' : '#d4d4d4')};
  border-bottom:1px solid #7f7f7f;&:last-child{height:29px;border-bottom:0}
`;
const ModelTabs = styled.div`height:21px;display:flex;background:#f7f7f7;border-top:1px solid #7f7f7f;font-size:14.5px;`;
const NavBtns = styled.div`width:83px;display:flex;border-top:1px solid #111;margin-top:-1px;background:#7c7e92;padding:0 1px;gap:1px;`;
const NavBtn = styled.div`flex:1;background:#a9abc0;border:1px solid #8e90a6;display:flex;align-items:center;justify-content:center;`;
const MTab = styled.div<{ $w: number; $on?: boolean; $ls?: number; $pr?: number }>`
  width:${p => p.$w}px;display:flex;align-items:center;justify-content:center;letter-spacing:${p => p.$ls ?? 0}px;
  padding:0 ${p => p.$pr ?? 0}px 2px 0;
  background:${p => (p.$on ? '#f7f7f7' : '#d4d4d4')};font-weight:${p => (p.$on ? 700 : 400)};border-right:1px solid #7f7f7f;
`;
const FilterBar = styled.div`height:33px;display:flex;border-bottom:1px solid #7f7f7f;`;
const FilterTools = styled.div`display:flex;padding-top:2px;`;
const Picker = styled.div`
  height:26px;margin:4px 0 0;width:46px;display:flex;border:1px solid #777;flex:none;
  > :first-child{width:32px;background:#ababab;border-right:1px solid #777;display:flex;align-items:center;justify-content:center}
  > :last-child{flex:1;display:flex;align-items:center;justify-content:center}
`;
const Status = styled.footer`
  height:21px;display:flex;align-items:center;padding:3px 4px 0 1px;font-size:14px;letter-spacing:.08px;
  span:first-child{flex:1} span:nth-child(2){width:70px;letter-spacing:-.15px} > i{transform:rotate(180deg);margin-right:27px}
`;

/* ---------- taskbar ---------- */
const Taskbar = styled.div`
  height:50px;display:flex;color:#fff;
  background:linear-gradient(90deg,#43322a 0%,#3f3029 60%,#33272a 72%,#38281f 78%,#33272a 86%,#46302f 92%,#33241f 100%);
`;
const Start = styled.div`width:60px;display:flex;align-items:center;justify-content:center;`;
const SearchBox = styled.div`
  width:360px;background:#f2f2f2;border:1px solid #c4c4c4;border-left:0;display:flex;align-items:center;color:#333;font-size:18px;
  padding-left:14px;letter-spacing:-.05px;overflow:hidden;
  span{margin-left:14px;flex:1}
`;
const App1 = styled.div<{ $w?: number; $run?: boolean; $on?: boolean }>`
  width:${p => p.$w ?? 61.9}px;display:flex;align-items:center;justify-content:center;position:relative;
  background:${p => (p.$on ? 'linear-gradient(90deg,#6d615b 56px,#564a43 56px)' : 'none')};
  &::after{content:"";display:${p => (p.$run ? 'block' : 'none')};position:absolute;left:5px;right:5px;bottom:0;height:3px;background:#76b9ed}
`;
const News = styled.div`display:flex;align-items:center;gap:14px;margin-left:132px;width:117px;font-size:17px;letter-spacing:-.2px;`;
const Tray = styled.div`display:flex;align-items:center;font-size:14.5px;letter-spacing:-.3px;`;
const Clock = styled.div`width:92px;margin-left:13px;text-align:center;line-height:23px;font-size:15px;letter-spacing:-.6px;`;
const Note = styled.div`width:52px;margin-left:11px;border-right:1px solid #6d625e;height:50px;`;

/* ---------- part geometry ---------- */
const leftEdge: [number, number][] = [
  [973, 523.3], [962, 522.3], [952, 520], [772.5, 487.7], [762, 486], [753, 486.6], [745, 489.5], [738, 494.5], [733, 501], [730, 509],
  [730, 516], [732.5, 523], [737, 529], [744, 533], [752, 538.5], [758.5, 545], [764, 554.5], [768, 566], [769.5, 579], [768, 592],
  [764, 604], [758, 613.5], [750, 621.7], [742, 627], [734, 632], [729.5, 638], [727.5, 646], [728, 655], [733, 670], [740.4, 688.3], [753, 714],
  [769, 738.3], [787.4, 760], [802.4, 775.7], [826.8, 795.7], [849.4, 810], [857, 814.5], [865, 817], [874, 818],
];
const cutout = [...leftEdge, ...leftEdge.slice(1).reverse().map(([x, y]) => [1946 - x, y] as [number, number])];
const circle = (x: number, y: number, r: number) =>
  `M${x - r} ${y}a${r} ${r} 0 1 0 ${2 * r} 0a${r} ${r} 0 1 0 ${-2 * r} 0z`;
const gon = (x: number, y: number, rx: number, ry: number, n: number) =>
  'M' + Array.from({ length: n }, (_, i) => {
    const a = (i * 2 * Math.PI) / n;
    return `${(x + rx * Math.cos(a)).toFixed(1)} ${(y + ry * Math.sin(a)).toFixed(1)}`;
  }).join('L') + 'z';
const plate = [
  gon(973, 568, 325, 342, 64), gon(973, 407, 71.5, 71.5, 28), circle(973, 310.7, 7.5), circle(876, 407, 7.5), circle(1069.5, 407, 7.5),
  circle(714.5, 579, 16.5), circle(1231.5, 579, 16.5), circle(903.7, 855, 7.5), circle(1041.7, 855, 7.5),
  'M' + cutout.map(p => p.join(' ')).join('L') + 'z',
].join('');

const col1 = ['bendA', 'bendB', 'bendC', '-', 'g1', 'g2', 'g3', 'g4', 'g5', 'g6', 'g7>', 'umbrella', '-', 'cutExtrude', 'holeSq', 'vent', '-', 'g8', 'g9', 'g10', 'g11', 'fold', 'box3'];
const col2 = ['w1', 'w2', 'w3', 'w4', 'w5', 'w6', 'w7', '-', 'sketch', 'wrench', 'screen', '-', 'stackA', 'stackB'];
const col3 = ['d1', 'd2', 'd3', 'd4', '-', 'd5', 'd6', 'd7', 'd8', '-', 'a1', 'a2', 'a3', 'a4', 'a5', 'a6', '-', 'b1', 'b2', 'b3', 'b4'];
const Column = ({ w, h, pad, grip, rule, items, right }: { w: number; h: number; pad: number; grip: number; rule: number; items: string[]; right?: boolean }) => (
  <DockCol $w={w} $h={h} $pad={pad} $right={right}>
    <HGrip $w={grip} />
    {items.map((it, i) => it === '-' ? <DockRule key={i} $w={rule} /> : (
      <DockIcon key={i}><Glyph n={it.replace('>', '')} />{it.endsWith('>') && <Tri $dim />}</DockIcon>
    ))}
  </DockCol>
);

const restore = (c: string) => <svg width="16" height="16" viewBox="0 0 16 16"><path d="M5 5V1h10v9h-4M1 6h9v9H1zM1 7h9M5 1.500h10" fill="none" stroke={c} strokeWidth="1.500" /></svg>;
const cross = (c: string) => <svg width="12" height="12" viewBox="0 0 12 12"><path d="M1 1l10 10M11 1L1 11" stroke={c} strokeWidth="1.700" /></svg>;
const dash = (c: string) => <svg width="12" height="16" viewBox="0 0 12 16"><path d="M1 13h10" stroke={c} strokeWidth="2" /></svg>;

const Logo = () => (
  <svg width="23" height="24" viewBox="0 0 23 24" fill="none" stroke="#dc2a22">
    <path d="M7 3.500c4-2.500 7-3 8-2.500.8.500-1 2.500-5 4.500 2 .5 2 2.500 0 4" strokeWidth="1.800" />
    <path d="M3 12h5c3 1 1 8-7 11 2-3 4-7 6-10" strokeWidth="1.800" />
    <path d="M20.500 11.500c-4-.5-7 .5-7 2.500s5 2.500 4 5c-.8 1.800-4 2.500-7 2" strokeWidth="2.200" />
  </svg>
);

const Artwork = () => (
  <svg width="97" height="48" viewBox="0 0 97 48">
    <path d="M2 42c-5-9 8-14 14-18C14 14 30 13 38 11c8-4 18-6 24-4l35-3v44H8z" fill="#8fd0de" />
    <path d="M60 14c4-6 12-10 18-9l19-3v46H40z" fill="#e0a06a" /><path d="M66 4c12-5 22-3 31-2v14l-9-5z" fill="#6f9a2c" />
    <path d="M26 32l22 3 20-9 29 8v14H22z" fill="#d5955e" /><path d="M16 48c4-10 16-14 28-14l10 14z" fill="#7ea83a" />
    <path d="M24 36c10 1 10 6 8 12h14c2-8-4-14-22-14zM60 12c16 2 26 8 24 15-2 3-8 4-12 3l6-4c4-6-6-11-18-12z" fill="#4b4b50" />
    <path d="M64 15c12 2 18 6 17 11M32 36c6 3 8 6 7 12" stroke="#f2cf4a" fill="none" strokeDasharray="3 2" />
    <path d="M28 6c3 6 5 14 6 20H23c1-7 3-14 5-20zM43 14l4 10h-7zM10 24l4 10H6zM55 2l3 7h-6zM49 24l8 24H43zM61 24l8 24H52z" fill="#b4713f" />
    <path d="M28 6c1 8 2 14 1 20h5c-1-6-3-14-6-20zM61 24l0 24h8z" fill="#8c4f2a" /><path d="M60 10c5-6 14-5 20-2l10 8 5 16-9-4-10-14-14 8z" fill="#f0c08c" />
    <path d="M78 8l12 8 5 16-6-3-5-13z" fill="#c88a50" /><rect x="73" y="25" width="6" height="4" rx="1" fill="#e03b30" />
  </svg>
);

const appIcons: Record<string, React.ReactNode> = {
  pc: <g><path d="M3 2h23v19H3z" fill="#2d6ea4" stroke="#b6d4e8" strokeWidth="1.800" /><path d="M6 6h3M6 11h3M6 15h3M11 6h12M11 10h9" stroke="#fff" strokeWidth="1.600" strokeDasharray="2 1" /><path d="M12 16h17v10H14z" fill="#2f8b45" stroke="#9fd0a6" strokeWidth=".8" /><path d="M15 18h3v4h-3zM20 18h3v4h-3zM25 18h3v4h-3z" fill="#143a1c" /><path d="M7 27h11" stroke="#a8c4da" strokeWidth="3" /></g>,
  explorer: <g><path d="M2 4h11l3 3h14v19H2z" fill="#f9c846" /><path d="M2 4h11l2 4H2z" fill="#e6a10c" /><path d="M2 9h28v18H2z" fill="#fdd568" /><path d="M7 29V18h18v11h-5v-5h-8v5z" fill="#3c8fd9" /></g>,
  pen: <g><defs><linearGradient id="pg" x2="0" y2="1"><stop stopColor="#13dff8" /><stop offset="1" stopColor="#2b4ee0" /></linearGradient></defs><rect x="1" y="1" width="30" height="30" rx="5" fill="url(#pg)" /><path d="M10 23l1-6 8-11c2-1 5 1 4 3l-8 11z" fill="#fff" /><path d="M11 17l4 3" stroke="#2b7fe0" /></g>,
  ut: <g><circle cx="16" cy="16" r="15" fill="#78b943" /><path d="M8 8l4 11c1 4 7 3 6-2L16 8M18 17c1 3 4 4 10 2M12 19l2 10" fill="none" stroke="#fff" strokeWidth="4" /></g>,
  ya: <g><circle cx="16" cy="16" r="15" fill="#fff" /><path d="M8 7l8 9v11M24 7l-8 9" fill="none" stroke="#fc3f1d" strokeWidth="4" /><path d="M24.500 6.500L18 14" stroke="#f03ac0" strokeWidth="4" /></g>,
  chip: <g><rect x="1" y="1" width="30" height="30" rx="6" fill="#fbfbff" /><path d="M13 4v24M19 4v24" stroke="#f3b400" strokeWidth="3" /><path d="M13 18v10M19 18v10" stroke="#a34be8" strokeWidth="3" /><path d="M4 13h12M4 19h12" stroke="#f4513b" strokeWidth="3" /><path d="M16 13h12M16 19h12" stroke="#2f8df5" strokeWidth="3" /><circle cx="16" cy="16" r="8" fill="#15161a" /><circle cx="16" cy="16" r="4" fill="#fff" /><circle cx="16" cy="16" r="2" fill="#15161a" /></g>,
  vs: <g><path d="M1 11l3-2 20 15v6z" fill="#1a85d0" /><path d="M1 21l3 2L24 9V2z" fill="#0a6cba" /><path d="M23 1l8 4v22l-8 4z" fill="#2fa5f0" /></g>,
  chrome: <g><circle cx="16" cy="16" r="15" fill="#fbc116" /><path d="M16 16L3 8.500a15 15 0 0 1 26 0H16z" fill="#e33b2e" /><path d="M16 16L3 8.500A15 15 0 0 0 14.500 31L22 19.500z" fill="#269a48" /><path d="M16 9h13.200" stroke="#e33b2e" strokeWidth="1.500" /><circle cx="16" cy="16" r="7.500" fill="#fff" /><circle cx="16" cy="16" r="5.800" fill="#3b7ded" /></g>,
  remote: <g><path d="M9 5h20v17H9z" fill="#eee" stroke="#999" strokeWidth="2.500" /><path d="M3 11h21v16H3z" fill="#fff" stroke="#aaa" strokeWidth="2" /><path d="M7 26a7 7 0 0 1 14 0z" fill="#e33b2e" /><path d="M7 26a7 7 0 0 1 2-5l5 5z" fill="#269a48" /><path d="M21 26a7 7 0 0 0-1-4l-6 4z" fill="#fbc116" /><path d="M11 26a3 3 0 0 1 6 0z" fill="#3b7ded" stroke="#fff" strokeWidth=".8" /></g>,
  edge: <g><defs><linearGradient id="eg"><stop stopColor="#2aa7dd" /><stop offset=".6" stopColor="#36c2c4" /><stop offset="1" stopColor="#66dc62" /></linearGradient></defs><circle cx="16" cy="16" r="15" fill="#1a63b8" /><path d="M1 15C2 5 9 1 16 1c9 0 15 6 15 13 0 6-5 8-9 8-3 0-5-1-4-3 4-4-1-9-7-9-5 0-9 2-10 5z" fill="url(#eg)" /><path d="M1 15c2-4 6-5 10-5-5 4-6 13 3 19-8 0-14-6-13-14z" fill="#2486d6" /><path d="M18 14c3 2 2 4 0 6 0 3 7 4 11 1l1 2c-4 4-12 4-15-1-2-4 0-7 3-8z" fill="#3f3029" /></g>,
  sw: <g><path d="M2 6L15 1l14 4v20l-12 6L2 24z" fill="#c3161c" stroke="#3a0508" /><path d="M2 6l15 4 12-5M17 10v21" fill="none" stroke="#3a0508" /><path d="M2 6L15 1l14 4-12 5z" fill="#e3262c" /><text x="3" y="22" fontSize="16" fontWeight="700" fill="#fff" fontFamily="Liberation Sans" textLength="11" lengthAdjust="spacingAndGlyphs">S</text><text x="17" y="22" fontSize="15" fontWeight="700" fill="#fff" fontFamily="Liberation Sans" textLength="12" lengthAdjust="spacingAndGlyphs">W</text><text x="13" y="31" fontSize="8" fontWeight="700" fill="#fff" fontFamily="Liberation Sans" textLength="17">2021</text></g>,
  word: <g><path d="M7 1h22v24H7z" fill="#dce8f7" stroke="#5482c0" /><path d="M2 2h20v22H2z" fill="#2f62b0" stroke="#a9c3e8" /><path d="M4 6l3 13 5-12 3 12 5-13" fill="none" stroke="#fff" strokeWidth="2.600" /><path d="M16 14l14 3-2 13-14-4z" fill="#f6f9fd" stroke="#9bb5dd" /><path d="M18 18l9 2M18 21l9 2M17 24l9 2" stroke="#8aa8d6" /></g>,
  tg: <g><circle cx="14" cy="15" r="14" fill="#2f9fd9" /><path d="M5 15l17-7-3 14-5-4-3 3v-5z" fill="#fff" /><rect x="12" y="18" width="20" height="14" rx="4" fill="#ef3b36" /><text x="14" y="29" fontSize="10.500" fill="#fff" fontFamily="Liberation Sans" textLength="16">..31</text></g>,
  excel: <g><path d="M3 1h26v27H3z" fill="#e9f3e2" stroke="#67a355" /><path d="M3 1h19v24H3z" fill="#bfe0ae" /><path d="M7 4l12 17M19 4L6 21" stroke="#2f8a26" strokeWidth="4.200" /><path d="M16 14l14 3-2 12-14-4z" fill="#f8fcf6" stroke="#8dbd7c" /><path d="M18 18l9 2M18 21l9 2M17 24l9 2" stroke="#7ab067" /></g>,
};
const AppIcon = ({ n }: { n: string }) => <svg width="32" height="32" viewBox="0 0 32 32">{appIcons[n]}</svg>;

export default function App() {
  return (
    <Screen>
      <Global />
      <TitleBar>
        <TopLight />
        <Brand><Logo /><span><b>SOLID</b>WORKS</span></Brand>
        <Menus>
          <MenuItem $w={36}>File</MenuItem><MenuItem $w={39}>Edit</MenuItem><MenuItem $w={45}>View</MenuItem><MenuItem $w={50}>Insert</MenuItem>
          <MenuItem $w={47}>Tools</MenuItem><MenuItem $w={110}>PhotoView 360</MenuItem><MenuItem $w={66}>Window</MenuItem>
          <svg width="14" height="18" viewBox="0 0 14 18"><path d="M7 1l6 5-2 1-1 4-3-3-6 6 4-7-3-2 4-1z" fill="#8b8b8b" stroke="#8b8b8b" /></svg>
        </Menus>
        <DocTitle>Шпангоут2.SLDPRT *</DocTitle>
        <Search>
          <svg width="19" height="19" viewBox="0 0 19 19"><path d="M.5.500h18v18H.5z" fill="#222" stroke="#222" /><path d="M2 2h15v15H2z" fill="none" stroke="#fff" strokeWidth=".8" /><path d="M4 4l5 5-5 5M10 14.500h5" fill="none" stroke="#fff" strokeWidth="1.500" /></svg>
          <span>Search Commands</span>
          <svg width="18" height="18" viewBox="0 0 18 18"><circle cx="7.500" cy="7.500" r="6.200" fill="none" stroke="#8a8a8a" strokeWidth="1.500" /><path d="M12 12l5 5.500" stroke="#8a8a8a" strokeWidth="1.800" /></svg>
          <svg width="20" height="5" viewBox="0 0 20 5"><path d="M8 0h7l-3.500 4.500z" fill="#777" /></svg>
        </Search>
        <WinButtons $pad={3} $cell={41}>
          <svg height="20" viewBox="-10.500 0 41 20" fill="none" stroke="#4a4a4a" strokeWidth="1.300"><circle cx="11" cy="10" r="8.500" /><circle cx="11" cy="7.500" r="3.200" /><path d="M6 16c0-6 10-6 10 0" /></svg>
          <svg height="20" viewBox="-10.500 0 41 20" fill="none" stroke="#4a4a4a" strokeWidth="1.400"><circle cx="10" cy="10" r="8.500" /><path d="M7 8c0-4 6-4 6-1 0 2-3 2.500-3 5M10 13.500v2" strokeWidth="2" /></svg>
          {dash('#444')}{restore('#444')}{cross('#444')}
        </WinButtons>
      </TitleBar>

      <QuickBar>
        <Grip $m="3px 6px 2px 3px" />
        <QuickTools><Tools items={['home', 'doc', '>', 'open', '>', 'save', '>', 'traffic', 'gear', '>', 'undo', '>']} /></QuickTools>
        <Rule $m="0 3px 0 5px" /><Grip $m="3px 7px 2px 0" />
        <QuickTools><Tools arrow={19.2} items={['zoomFit', 'zoomOff', 'prev', '|', 'rotOff', 'section', 'orient', '>', 'shaded', '>', 'eye', '>', 'ballPencil', 'ballScene', 'monitor', '>']} /></QuickTools>
        <Rule $m="0 0 0 7px" />
      </QuickBar>

      <Ribbon>
        <Starter>
          <Glyph n="home" /><i /><Glyph n="save" /><Tri /><Glyph n="undo" /><Tri $dim />
          <Glyph n="doc" /><Tri /><Glyph n="traffic" /><i /><i /><i />
          <Glyph n="open" /><Tri /><Glyph n="gear" /><Tri /><i /><i />
        </Starter>
        <Rule $m="1px 0 2px" $c="#bdbdbd" />
        <BigBtn w={72} icon="extrude" lines={['Extruded', 'Boss/Base']} />
        <BigBtn w={71} icon="revolve" lines={['Revolved', 'Boss/Base']} />
        <SmallStack w={163} rows={[['sweep', 'Swept Boss/Base'], ['loft', 'Lofted Boss/Base'], ['boundary', 'Boundary Boss/Base']]} />
        <Rule $m="1px 0 2px" $c="#bdbdbd" />
        <BigBtn w={66} icon="cutExtrude" lines={['Extruded', 'Cut']} />
        <BigBtn w={81} icon="hole" lines={['Hole Wizard']} arrow />
        <BigBtn w={68} icon="revCut" lines={['Revolved', 'Cut']} />
        <SmallStack w={123} rows={[['sweptCut', 'Swept Cut'], ['loftCut', 'Lofted Cut'], ['boundCut', 'Boundary Cut']]} />
        <Rule $m="1px 0 2px" $c="#bdbdbd" />
        <BigBtn w={39} icon="fillet" lines={['Fillet']} arrow />
        <BigBtn w={96} icon="pattern" lines={['Linear Pattern']} arrow />
        <SmallStack w={70} rows={[['rib', 'Rib'], ['draft', 'Draft'], ['shell', 'Shell']]} />
        <SmallStack w={91} rows={[['wrap', 'Wrap'], ['intersect', 'Intersect'], ['mirror', 'Mirror']]} />
        <Rule $m="1px 0 2px" $c="#bdbdbd" />
        <BigBtn w={72} icon="refgeom" lines={['Referenc...']} arrow />
        <BigBtn w={53} icon="curves" lines={['Curves']} arrow />
        <Rule $m="1px 0 2px" $c="#bdbdbd" />
        <BigBtn w={73} icon="instant" lines={['Instant3D']} />
        <Collapse><svg width="11" height="8" viewBox="0 0 11 8"><path d="M1 6.500l4.500-5 4.500 5" fill="none" stroke="#333" strokeWidth="2" /></svg></Collapse>
      </Ribbon>

      <Work>
        <TabRow>
          <Tab $w={80} $on>Features</Tab><Tab $w={62}>Sketch</Tab><Tab $w={75}>Surfaces</Tab><Tab $w={109}>Direct Editing</Tab><Tab $w={70}>Markup</Tab>
          <Tab $w={74}>Evaluate</Tab><Tab $w={136}>MBD Dimensions</Tab><Tab $w={105}>Render Tools</Tab><Tab $w={173}>SOLIDWORKS Add-Ins</Tab>
          <DocButtons>
            <svg height="14" viewBox="0 0 12 14"><path d="M.7.700h10.600v12.600H.7zM.7 2h10.600" fill="none" stroke="#999" strokeWidth="1.300" /><path d="M6 4v6L2.500 7z" fill="#999" /></svg>
            <svg height="14" viewBox="0 0 12 14"><path d="M.7.700h10.600v12.600H.7zM.7 2h10.600" fill="none" stroke="#999" strokeWidth="1.300" /><path d="M6 4v6l3.500-3z" fill="#999" /></svg>
            {dash('#999')}{restore('#999')}{cross('#999')}
          </DocButtons>
        </TabRow>
        <Body>
          <Dock>
            <Column w={53} h={565} pad={6} grip={46} rule={44} items={col1} right />
            <Column w={34} h={349} pad={6} grip={22} rule={25} items={col2} right />
            <Column w={31} h={513} pad={6} grip={22} rule={25} items={col3} />
          </Dock>
          <Right>
            <Canvas>
              <Scene width="1801" height="772" viewBox="119 183 1801 772">
                <path d={plate} fill="#383f59" fillRule="evenodd" stroke="#0b0c10" strokeWidth="1.300" />
                <path d="M167 885v-34" stroke="#0c0" strokeWidth="4" /><path d="M163.500 863l3.500-12 3.500 12z" fill="#0a9a0a" stroke="#0a9a0a" />
                <path d="M167 887h28" stroke="#c00" strokeWidth="4" /><path d="M193 883.500l9 3.500-9 3.500z" fill="#a00" stroke="#a00" />
                <circle cx="167" cy="887" r="4" fill="#0808b8" />
                <text x="165" y="843" fontSize="10" fill="#4be04b" fontFamily="Liberation Sans">Y</text>
                <text x="209" y="887" fontSize="10" fill="#f05050" fontFamily="Liberation Sans">X</text>
              </Scene>
              <Splitter><i /></Splitter>
              <Hud><Tools dim cell={26} arrow={14} push={0} items={['zoomFit', 'zoomArea', 'prev', 'section', 'annot', 'orient', '>', 'shaded', '>', 'eye', '>', 'ballPencil', 'ballScene', '>', 'monitor', '>']} /></Hud>
              <TaskPane>{['home', 'books', 'folder', 'blocks', 'ball', 'list'].map(n => <Pane key={n} $on={n === 'ball'}><Glyph n={n} s={18} /></Pane>)}</TaskPane>
            </Canvas>
            <ModelTabs>
              <NavBtns>
                {['M3 1v10M10 1v10L4 6z', 'M9 1v10L3 6z', 'M3 1v10l6-5z', 'M2 1v10l6-5zM9 1v10'].map(d => (
                  <NavBtn key={d}><svg width="12" height="12" viewBox="0 0 12 12"><path d={d} fill="#70738a" stroke="#70738a" /></svg></NavBtn>
                ))}
              </NavBtns>
              <MTab $w={76} $on $ls={0.25}>Model</MTab><MTab $w={89} $ls={-0.35}>3D Views</MTab><MTab $w={240} $ls={0.08} $pr={12}>Исследование движения 1</MTab>
            </ModelTabs>
          </Right>
        </Body>
      </Work>

      <FilterBar>
        <Grip $m="2px 6px 2px 3px" />
        <FilterTools><Tools items={['fOff', 'fOff2', 'fOn']} /></FilterTools>
        <Picker><span><Glyph n="cursor" s={22} /></span><span><Tri /></span></Picker>
        <FilterTools><Tools items={['cursOff']} /></FilterTools>
        <Rule $m="5px 5px 5px 3px" />
        <FilterTools><Tools cell={27} items={Array.from({ length: 29 }, (_, i) => `s${i + 1}`)} /></FilterTools>
        <Rule $m="0 0 0 7px" />
      </FilterBar>
      <Status>
        <span>SOLIDWORKS Premium 2021 SP4.1</span><span>MMGS</span><Tri />
        <svg width="16" height="16" viewBox="0 0 16 16"><path d="M1 4l7-3 7 4-2 7-5 3-6-7zM4 5l6 4M5 3l7 4M10 9l-2 5M10 9l5-4" fill="#e4e4e4" stroke="#444" strokeWidth="1.200" /><circle cx="6" cy="6" r="2" fill="#fff" stroke="#444" /></svg>
      </Status>

      <Taskbar>
        <Start><svg width="20" height="20" viewBox="0 0 20 20"><path d="M0 3l8.500-1.200v7.700H0zM9.500 1.600L20 0v9.500H9.500zM0 10.500h8.500v7.700L0 17zM9.500 10.500H20V20L9.500 18.400z" fill="#fff" /></svg></Start>
        <SearchBox>
          <svg width="22" height="22" viewBox="0 0 22 22"><circle cx="14" cy="8" r="6.800" fill="none" stroke="#222" strokeWidth="1.500" /><path d="M9.500 13L2 20.500" stroke="#222" strokeWidth="1.600" /></svg>
          <span>Type here to search</span><Artwork />
        </SearchBox>
        <App1 $w={60}><svg width="20" height="20" viewBox="0 0 20 20"><circle cx="10" cy="10" r="8" fill="none" stroke="#fff" strokeWidth="2.600" /></svg></App1>
        <App1 $w={63}><svg width="25" height="20" viewBox="0 0 25 20"><path d="M2 5.500h12v9H2zM2 0v3h12V0M2 20v-3h12v3M19 0v4M19 12v8" fill="none" stroke="#fff" strokeWidth="1.400" /><path d="M18 6h2.500v3.500H18z" fill="#fff" /></svg></App1>
        <App1><AppIcon n="pc" /></App1><App1 $run><AppIcon n="explorer" /></App1>
        {['pen', 'ut', 'ya', 'chip', 'vs', 'chrome', 'remote'].map(n => <App1 key={n}><AppIcon n={n} /></App1>)}
        <App1 $run><AppIcon n="edge" /></App1><App1 $run $on><AppIcon n="sw" /></App1>
        {['word', 'tg', 'excel'].map(n => <App1 key={n} $run><AppIcon n={n} /></App1>)}
        <News>
          <svg width="24" height="30" viewBox="0 0 24 30"><path d="M1 0h15l7 7v23H1z" fill="#38a9ee" /><path d="M16 0l7 7h-7z" fill="#a9dcfb" /><path d="M4 13v6h4v-4M11 19v-3M15 19h4v-8" fill="none" stroke="#1463b0" strokeWidth="2.500" /><path d="M4 23h16M4 27h16" stroke="#fff" strokeWidth="1.800" /></svg>
          Earn...
        </News>
        <Tray>
          <svg width="18" height="12" viewBox="0 0 18 12"><path d="M1 11l8-9 8 9" fill="none" stroke="#fff" strokeWidth="1.500" /></svg>
          <svg width="45" height="20" viewBox="-11 0 45 20"><path d="M1 7h3l5-4.500v15L4 13H1zM12 7.500q2 2.500 0 5M15 5.500q3.500 4.500 0 9" fill="none" stroke="#fff" strokeWidth="1.300" /><path d="M18 3q5 7 0 14" fill="none" stroke="#9a8f8a" strokeWidth="1.300" /></svg>
          <span>РУС</span>
          <Clock>10:12:55 PM<br />7/2/2025</Clock>
          <Note>
            <svg width="40" height="50" viewBox="0 0 40 50"><path d="M6 15h20v18H16l-4 4v-4H6z" fill="#fff" /><path d="M9 20h14M9 24h14M9 28h10" stroke="#33241f" strokeWidth="1.500" /><circle cx="26" cy="35" r="9.500" fill="#33302f" stroke="#8a8a8a" /><text x="22.500" y="40.500" fontSize="15" fill="#fff" fontFamily="Open Sans">1</text></svg>
          </Note>
        </Tray>
      </Taskbar>
    </Screen>
  );
}
